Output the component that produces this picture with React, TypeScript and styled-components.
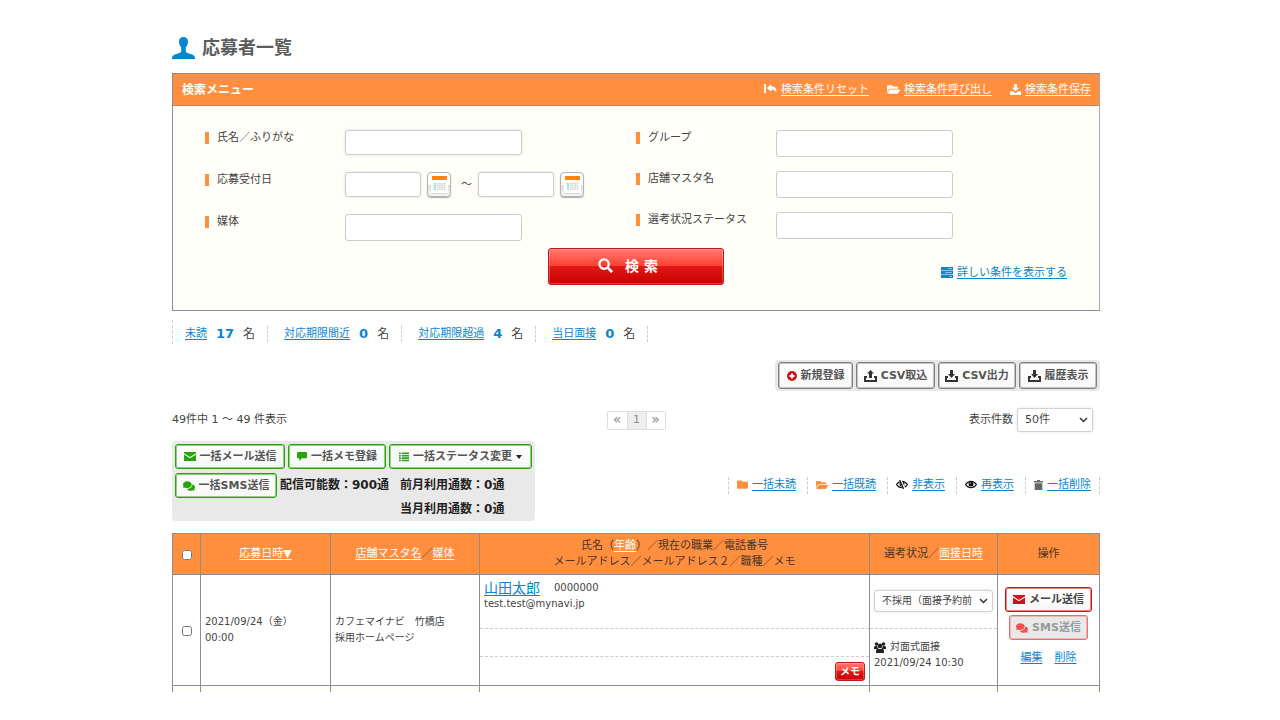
import React from "react";
import styled, { createGlobalStyle, css } from "styled-components";
import { FaFolderOpen, FaFolder, FaComments } from "react-icons/fa";

const color = {
  orange: "#ff8f3f",
  cream: "#fffef8",
  line: "#8e8e8e",
  text: "#444",
  link: "#0a85cf",
  green: "#27a30c",
  red: "#d2101c",
};

const Global = createGlobalStyle`
  *, *::before, *::after { box-sizing: border-box; }
  body { margin: 0; background: #fff; }
  body, button, input, select {
    font-family: "DejaVu Sans", "Noto Sans CJK JP", sans-serif;
    font-size: 11px;
    line-height: 16px;
    color: ${color.text};
  }
  a { color: ${color.link}; text-decoration: underline; text-underline-offset: 2px; }
  svg { flex: none; display: block; }
`;

const Page = styled.main`
  padding: 34px 180px 28px 172px;
`;

const Title = styled.h1`
  display: flex;
  align-items: center;
  gap: 7px;
  margin: 0 0 11px;
  font-size: 18px;
  line-height: 28px;
  color: #5c5c5c;
`;

/* search panel */

const Panel = styled.section`
  border: 1px solid ${color.line};
  border-right-color: #a8a8a8;
  background: ${color.cream};
`;

const PanelHead = styled.header`
  display: flex;
  justify-content: space-between;
  align-items: center;
  height: 32px;
  padding: 0 8px 0 9px;
  background: ${color.orange};
  border-bottom: 1px solid #b98460;
`;

const PanelTitle = styled.h2`
  margin: 0;
  font-size: 12px;
  line-height: 16px;
  color: #fff;
`;

const HeadLinks = styled.nav`
  display: flex;
  gap: 18px;
`;

const IconLink = styled.a<{ $icon?: string; $light?: boolean }>`
  display: inline-flex;
  align-items: center;
  gap: 4px;
  text-decoration: none;
  ${(p) => p.$light && "color: #fff;"}
  svg { color: ${(p) => p.$icon || "inherit"}; }
  span { text-decoration: underline; text-underline-offset: 2px; white-space: nowrap; }
`;

const Form = styled.form`
  padding: 24px 32px 25px;
`;

const Columns = styled.div`
  display: grid;
  grid-template-columns: 1fr 1fr;
`;

const FieldList = styled.div<{ $gap: number }>`
  display: flex;
  flex-direction: column;
  gap: ${(p) => p.$gap}px;
`;

const Field = styled.div`
  display: flex;
  align-items: flex-start;
`;

const FieldLabel = styled.label`
  display: flex;
  align-items: center;
  gap: 8px;
  flex: 0 0 140px;
  &::before {
    content: "";
    width: 4px;
    height: 12px;
    background: ${color.orange};
  }
`;

const TextBox = styled.input<{ $short?: boolean; $tall?: boolean }>`
  width: ${(p) => (p.$short ? 76 : 177)}px;
  height: ${(p) => (p.$tall ? 27 : 25)}px;
  padding: 0 8px;
  border: 1px solid #ccc;
  border-radius: 3px;
  background: #fff;
  ${(p) => !p.$tall && "box-shadow: 0 0 3px rgba(0, 0, 0, 0.12);"}
`;

const DateRange = styled.div`
  display: flex;
  align-items: center;
  gap: 6px;
`;

const RangeMark = styled.span`
  width: 15px;
  text-align: right;
`;

const CalendarButton = styled.button`
  display: flex;
  align-items: center;
  justify-content: center;
  width: 24px;
  height: 25px;
  padding: 0;
  border: 1px solid #b4b4b4;
  border-radius: 4px;
  background: linear-gradient(#fff 50%, #ddd 50%, #f4f4f4);
  box-shadow: 0 1px 1px #aaa;
`;

const FormFoot = styled.div`
  display: grid;
  grid-template-columns: 1fr auto 1fr;
  padding-top: 7px;
`;

const redGloss = css`
  border: 1px solid #c21a1a;
  border-radius: 3px;
  background: linear-gradient(#ff7a72, #ff3e30 50%, #e01818 50%, #c80000);
  box-shadow: inset 0 0 0 1px rgba(255, 255, 255, 0.25);
  color: #fff;
  font-weight: bold;
`;

const SearchButton = styled.button`
  ${redGloss}
  grid-column: 2;
  display: flex;
  align-items: center;
  justify-content: center;
  gap: 12px;
  width: 176px;
  height: 37px;
  padding: 0 16px 2px 0;
  font-size: 14px;
`;

const DetailLink = styled.div`
  justify-self: end;
  align-self: end;
  padding-bottom: 2px;
`;

/* counters */

const Counters = styled.ul`
  display: flex;
  margin: 9px 0 16px;
  padding: 0;
  list-style: none;
  border-left: 1px dashed #ccc;
`;

const Counter = styled.li`
  display: flex;
  align-items: center;
  gap: 9px;
  height: 16px;
  margin: 6px 0 2px;
  padding: 0 12px 0 16px;
  border-right: 1px dashed #ccc;
  font-size: 12px;
  &:first-child { padding-left: 12px; }
  a { font-size: 11px; }
  strong { font-size: 13px; color: ${color.link}; }
`;

/* toolbars */

const ToolRow = styled.div`
  display: flex;
  justify-content: flex-end;
`;

const ToolGroup = styled.div`
  display: flex;
  gap: 3px;
  padding: 2px 3px;
  border-radius: 4px;
  background: #e8e8e8;
`;

const tones = {
  gray: { line: "#808080", edge: "#c4c4c4", text: "#555", icon: "#333" },
  green: { line: color.green, edge: "#8fd07f", text: "#555", icon: color.green },
  red: { line: color.red, edge: "#e88388", text: "#444", icon: color.red },
  muted: { line: "#ee6c70", edge: "#f2b4b6", text: "#999", icon: "#f0504f" },
};

const ToolButton = styled.button<{ $tone: keyof typeof tones; $width: number; $height?: number }>`
  display: flex;
  align-items: center;
  justify-content: center;
  gap: 4px;
  width: ${(p) => p.$width}px;
  height: ${(p) => p.$height || 25}px;
  padding: 0;
  border: 1px solid ${(p) => tones[p.$tone].line};
  border-radius: 3px;
  box-shadow: inset 0 0 0 1px ${(p) => tones[p.$tone].edge};
  background: ${(p) => (p.$tone === "muted" ? "#e9e9e9" : "linear-gradient(#fff, #f7f7f7)")};
  color: ${(p) => tones[p.$tone].text};
  font-weight: bold;
  white-space: nowrap;
  svg { color: ${(p) => tones[p.$tone].icon}; }
`;

const ListBar = styled.div`
  display: grid;
  grid-template-columns: 1fr auto 1fr;
  align-items: center;
  margin: 17px 0 9px;
`;

const Pager = styled.nav`
  display: flex;
  border: 1px solid #ddd;
  border-radius: 2px;
`;

const PageLink = styled.a<{ $current?: boolean }>`
  width: 19px;
  height: 17px;
  line-height: 15px;
  font-size: ${(p) => (p.$current ? 11 : 14)}px;
  text-align: center;
  text-decoration: none;
  color: #888;
  background: ${(p) => (p.$current ? "#eee" : "#fff")};
  & + & { border-left: 1px solid #ddd; }
`;

const PerPage = styled.label`
  display: flex;
  align-items: center;
  justify-content: flex-end;
  gap: 4px;
  padding-right: 7px;
`;

const SelectWrap = styled.span<{ $width: number }>`
  position: relative;
  display: block;
  width: ${(p) => p.$width}px;
  svg {
    position: absolute;
    right: 5px;
    top: 50%;
    margin-top: -3px;
    pointer-events: none;
  }
`;

const Select = styled.select<{ $small?: boolean }>`
  appearance: none;
  display: block;
  width: 100%;
  height: ${(p) => (p.$small ? 22 : 24)}px;
  padding: 0 18px 0 7px;
  border: 1px solid #d2d2d2;
  border-radius: 3px;
  background: #fff;
  box-shadow: 0 0 3px rgba(0, 0, 0, 0.12);
  font-size: ${(p) => (p.$small ? 10 : 11)}px;
`;

const BulkRow = styled.div`
  display: flex;
  justify-content: space-between;
  align-items: center;
  margin-bottom: 12px;
`;

const BulkBox = styled.div`
  display: flex;
  flex-direction: column;
  gap: 4px;
  padding: 3px 3px 4px;
  border-radius: 4px;
  background: #e9e9e9;
`;

const BulkLine = styled.div`
  display: flex;
  gap: 3px;
`;

const Quota = styled.dl`
  display: grid;
  grid-template-columns: auto auto;
  justify-content: start;
  column-gap: 11px;
  row-gap: 8px;
  margin: 0;
  padding-top: 4px;
  font-size: 12px;
  font-weight: bold;
  color: #222;
  div { display: flex; }
  div:last-child { grid-column: 2; }
  dd { margin: 0; }
`;

const BulkLinks = styled.ul`
  display: flex;
  margin: 8px 0 0;
  padding: 0;
  list-style: none;
  border-left: 1px dashed #ccc;
  li {
    padding: 0 8px;
    height: 17px;
    border-right: 1px dashed #ccc;
  }
  li:not(:last-child) { padding-right: 11px; }
`;

/* applicants table */

const Table = styled.table`
  width: 100%;
  table-layout: fixed;
  border-collapse: collapse;
  th, td { border: 1px solid ${color.line}; padding: 0 4px; }
  th {
    height: 41px;
    background: ${color.orange};
    font-weight: normal;
    color: #4b3426;
  }
  th a { color: #fff; }
  td { font-size: 10px; text-align: left; }
`;

const Check = styled.input`
  display: block;
  width: 10px;
  height: 10px;
  margin: 2px auto 0;
`;

const FlushCell = styled.td`
  && { padding: 0; height: 111px; vertical-align: top; }
`;

const Slot = styled.div<{ $height: number; $last?: boolean }>`
  height: ${(p) => p.$height}px;
  padding: 5px 4px;
  ${(p) => !p.$last && "border-bottom: 1px dashed #ccc;"}
`;

const NameLine = styled.div`
  display: flex;
  align-items: center;
  gap: 14px;
  a { font-size: 14px; }
`;

const MemoButton = styled.button`
  ${redGloss}
  display: block;
  width: 30px;
  height: 19px;
  margin-left: auto;
  padding: 0;
  font-size: 10px;
`;

const StatusSlot = styled(Slot)`
  padding-top: ${(p) => (p.$last ? 10 : 15)}px;
`;

const Meeting = styled.div`
  display: flex;
  align-items: center;
  gap: 4px;
  svg { color: #222; }
`;

const Actions = styled.div`
  display: flex;
  flex-direction: column;
  align-items: center;
  gap: 3px;
  padding-top: 12px;
  font-size: 11px;
`;

const ActionLinks = styled.div`
  display: flex;
  gap: 12px;
  padding-top: 7px;
`;

const NextRow = styled.tr`
  background: ${color.cream};
  && td { height: 6px; border-bottom: 0; }
`;

/* icons */

const UserIcon = () => (
  <svg width="23" height="22" viewBox="0 0 23 22" fill="#0387d4" aria-hidden="true">
    <path d="M11.500 0C8.500 0 6.800 2 7 5c.1 2.200 1 4 2.200 5.200v4.300c0 .9-1.200 1.300-3.200 1.900C2.200 17.500 0 18.300 0 21v1h23v-1c0-2.700-2.200-3.500-6-4.600-2-.6-3.200-1-3.200-1.900v-4.300C15 9 15.900 7.200 16 5c.2-3-1.500-5-4.500-5z" />
  </svg>
);

const ResetIcon = () => (
  <svg width="13" height="11" viewBox="0 0 13 11" fill="currentColor" aria-hidden="true">
    <path d="M0 0h2v9H0zM3 4l4-4v2.300c3.600 0 5.800 2 5.500 6.200-.9-2-2.500-2.800-5.500-2.800V8z" />
  </svg>
);

const SaveIcon = () => (
  <svg width="11" height="11" viewBox="0 0 12 12" fill="currentColor" aria-hidden="true">
    <path d="M4.500 0h3v4H10L6 8 2 4h2.500zM0 8h3l3 2 3-2h3v4H0z" />
  </svg>
);

const PlusIcon = () => (
  <svg width="10" height="10" viewBox="0 0 10 10" aria-hidden="true">
    <circle cx="5" cy="5" r="5" fill={color.red} />
    <path d="M5 2.500v5M2.500 5h5" stroke="#fff" strokeWidth="2" />
  </svg>
);

const TrayIcon = ({ up }: { up?: boolean }) => (
  <svg width="13" height="12" viewBox="0 0 13 12" fill="currentColor" aria-hidden="true">
    <path d="M0 6h3v2H2v2h9V8h-1V6h3v6H0z" />
    <path d={up ? "M6.500 0L10 3.500H8V8H5V3.500H3z" : "M5 0h3v4h2L6.500 8 3 4h2z"} />
  </svg>
);

const CalendarIcon = () => (
  <svg width="17" height="18" viewBox="0 0 17 18" aria-hidden="true">
    <path fill="#fff" d="M0 4h17v13H0z" />
    <path fill="#d8d8d8" d="M1 17h15v1H1z" />
    <path fill="#ff8412" d="M1 0h15v4H1z" />
    <path fill="#6fe3d6" d="M3 7h2v7H3z" />
    <path stroke="#cfcfcf" strokeWidth="7" strokeDasharray="1.500 .7" d="M6 10.500h9" />
    <path stroke="#fff" strokeWidth=".6" d="M2 8.800h13M2 10.800h13M2 12.700h13" />
  </svg>
);

const LensIcon = () => (
  <svg width="15" height="15" viewBox="0 0 16 16" fill="none" stroke="#fff" aria-hidden="true">
    <circle cx="6.500" cy="6.500" r="5" strokeWidth="2.400" />
    <path d="M10 10l5 5" strokeWidth="3" />
  </svg>
);

const RowsIcon = () => (
  <svg width="12" height="11" viewBox="0 0 12 11" aria-hidden="true">
    <path fill="#1a80c8" d="M0 0h12v3H0zM0 4h12v3H0zM0 8h12v3H0z" />
    <path fill="#8fc6ea" d="M7 1h4v1H7zM4 5h7v1H4zM8 9h3v1H8zM0 3h12v1H0zM0 7h12v1H0z" />
  </svg>
);

const MailIcon = () => (
  <svg width="12" height="9" viewBox="0 0 12 9" fill="currentColor" aria-hidden="true">
    <path d="M0 0h12v1.200L6 5 0 1.200zM0 2.500l6 3.800 6-3.800V9H0z" />
  </svg>
);

const MemoIcon = () => (
  <svg width="10" height="9" viewBox="0 0 11 10" fill="currentColor" aria-hidden="true">
    <path d="M1 0h9q1 0 1 1v5q0 1-1 1H5.500L2.500 10V7H1Q0 7 0 6V1q0-1 1-1z" />
  </svg>
);

const ListIcon = () => (
  <svg width="10" height="10" viewBox="0 0 11 10" fill="currentColor" aria-hidden="true">
    <path d="M0 0h2v1.700H0zM3 0h8v1.700H3zM0 2.700h2v1.700H0zM3 2.700h8v1.700H3zM0 5.400h2v1.700H0zM3 5.400h8v1.700H3zM0 8.100h2v1.700H0zM3 8.100h8v1.700H3z" />
  </svg>
);

const CaretIcon = () => (
  <svg width="6" height="4" viewBox="0 0 6 4" aria-hidden="true">
    <path fill="#222" d="M0 0h6L3 4z" />
  </svg>
);

const ChevronIcon = () => (
  <svg width="9" height="6" viewBox="0 0 9 6" fill="none" stroke="#333" strokeWidth="1.500" aria-hidden="true">
    <path d="M1 1l3.500 3.500L8 1" />
  </svg>
);

const EyeIcon = ({ off }: { off?: boolean }) => (
  <svg width="12" height="9" viewBox="0 0 12 9" aria-hidden="true">
    <path d="M.6 4.500C3.200.2 8.800.2 11.400 4.500 8.800 8.800 3.200 8.800.6 4.500z" fill="#fff" stroke="currentColor" strokeWidth="1.200" />
    <circle cx="6" cy="4" r="2.500" fill="currentColor" />
    <path d="M5 3.800q0-1 1-1.200" stroke="#fff" strokeWidth=".7" fill="none" />
    {off && <path d="M4.300 0l4 9" stroke="#fff" strokeWidth="2.400" />}
    {off && <path d="M3.700 0l4 9" stroke="currentColor" strokeWidth="1.200" />}
  </svg>
);

const TrashIcon = () => (
  <svg width="9" height="10" viewBox="0 0 9 10" fill="currentColor" aria-hidden="true">
    <path d="M3 0h3v1h3v1.500H0V1h3zM.7 3.200h7.600V10H.7z" />
  </svg>
);

const GroupIcon = () => (
  <svg width="12" height="11" viewBox="0 0 12 11" fill="currentColor" aria-hidden="true">
    <circle cx="2.500" cy="2" r="1.800" />
    <circle cx="9.500" cy="2" r="1.800" />
    <circle cx="6" cy="3.900" r="2.300" />
    <path d="M0 7V5.500Q.1 4 1.300 4h2Q3.300 5.500 4 6.400L2.500 7zM12 7V5.500Q11.900 4 10.700 4h-2q0 1.500-.7 2.400L9.500 7zM2 11V9q.2-2.400 2-2.400 2 1 4 0 1.800 0 2 2.400v2z" />
  </svg>
);

const counters = [
  { label: "未読", count: 17 },
  { label: "対応期限間近", count: 0 },
  { label: "対応期限超過", count: 4 },
  { label: "当日面接", count: 0 },
];

const bulkLinks = [
  { label: "一括未読", icon: <FaFolder size={11} />, tint: color.orange },
  { label: "一括既読", icon: <FaFolderOpen size={12} />, tint: color.orange },
  { label: "非表示", icon: <EyeIcon off />, tint: "#111" },
  { label: "再表示", icon: <EyeIcon />, tint: "#111" },
  { label: "一括削除", icon: <TrashIcon />, tint: "#666" },
];

const rightFields = [
  { id: "group", label: "グループ" },
  { id: "shop", label: "店舗マスタ名" },
  { id: "status", label: "選考状況ステータス" },
];

export default function App() {
  return (
    <Page>
      <Global />
      <Title>
        <UserIcon />
        応募者一覧
      </Title>

      <Panel>
        <PanelHead>
          <PanelTitle>検索メニュー</PanelTitle>
          <HeadLinks>
            <IconLink href="#" $light><ResetIcon /><span>検索条件リセット</span></IconLink>
            <IconLink href="#" $light><FaFolderOpen size={13} /><span>検索条件呼び出し</span></IconLink>
            <IconLink href="#" $light><SaveIcon /><span>検索条件保存</span></IconLink>
          </HeadLinks>
        </PanelHead>
        <Form onSubmit={(e) => e.preventDefault()}>
          <Columns>
            <FieldList $gap={17}>
              <Field>
                <FieldLabel htmlFor="name">氏名／ふりがな</FieldLabel>
                <TextBox id="name" />
              </Field>
              <Field>
                <FieldLabel htmlFor="from">応募受付日</FieldLabel>
                <DateRange>
                  <TextBox id="from" $short />
                  <CalendarButton type="button" aria-label="開始日を選択"><CalendarIcon /></CalendarButton>
                  <RangeMark>～</RangeMark>
                  <TextBox $short aria-label="終了日" />
                  <CalendarButton type="button" aria-label="終了日を選択"><CalendarIcon /></CalendarButton>
                </DateRange>
              </Field>
              <Field>
                <FieldLabel htmlFor="media">媒体</FieldLabel>
                <TextBox id="media" $tall />
              </Field>
            </FieldList>
            <FieldList $gap={14}>
              {rightFields.map((f) => (
                <Field key={f.id}>
                  <FieldLabel htmlFor={f.id}>{f.label}</FieldLabel>
                  <TextBox id={f.id} $tall />
                </Field>
              ))}
            </FieldList>
          </Columns>
          <FormFoot>
            <SearchButton type="submit"><LensIcon />検 索</SearchButton>
            <DetailLink>
              <IconLink href="#"><RowsIcon /><span>詳しい条件を表示する</span></IconLink>
            </DetailLink>
          </FormFoot>
        </Form>
      </Panel>

      <Counters>
        {counters.map((c) => (
          <Counter key={c.label}>
            <a href="#">{c.label}</a>
            <strong>{c.count}</strong>
            <span>名</span>
          </Counter>
        ))}
      </Counters>

      <ToolRow>
        <ToolGroup>
          <ToolButton $tone="gray" $width={75} $height={27}><PlusIcon />新規登録</ToolButton>
          <ToolButton $tone="gray" $width={79} $height={27}><TrayIcon up />CSV取込</ToolButton>
          <ToolButton $tone="gray" $width={78} $height={27}><TrayIcon />CSV出力</ToolButton>
          <ToolButton $tone="gray" $width={78} $height={27}><TrayIcon />履歴表示</ToolButton>
        </ToolGroup>
      </ToolRow>

      <ListBar>
        <span>49件中 1 ～ 49 件表示</span>
        <Pager aria-label="ページ">
          <PageLink href="#">«</PageLink>
          <PageLink href="#" $current>1</PageLink>
          <PageLink href="#">»</PageLink>
        </Pager>
        <PerPage>
          表示件数
          <SelectWrap $width={76}>
            <Select defaultValue="50"><option value="50">50件</option></Select>
            <ChevronIcon />
          </SelectWrap>
        </PerPage>
      </ListBar>

      <BulkRow>
        <BulkBox>
          <BulkLine>
            <ToolButton $tone="green" $width={110}><MailIcon />一括メール送信</ToolButton>
            <ToolButton $tone="green" $width={98}><MemoIcon />一括メモ登録</ToolButton>
            <ToolButton $tone="green" $width={143}><ListIcon />一括ステータス変更<CaretIcon /></ToolButton>
          </BulkLine>
          <BulkLine>
            <ToolButton $tone="green" $width={102}><FaComments size={12} />一括SMS送信</ToolButton>
            <Quota>
              <div><dt>配信可能数：</dt><dd>900通</dd></div>
              <div><dt>前月利用通数：</dt><dd>0通</dd></div>
              <div><dt>当月利用通数：</dt><dd>0通</dd></div>
            </Quota>
          </BulkLine>
        </BulkBox>
        <BulkLinks>
          {bulkLinks.map((b) => (
            <li key={b.label}>
              <IconLink href="#" $icon={b.tint}>{b.icon}<span>{b.label}</span></IconLink>
            </li>
          ))}
        </BulkLinks>
      </BulkRow>

      <Table>
        <colgroup>
          <col width="28" />
          <col width="130" />
          <col width="149" />
          <col />
          <col width="128" />
          <col width="102" />
        </colgroup>
        <thead>
          <tr>
            <th><Check type="checkbox" aria-label="すべて選択" /></th>
            <th><a href="#">応募日時▼</a></th>
            <th><a href="#">店舗マスタ名</a>／<a href="#">媒体</a></th>
            <th>氏名（<a href="#">年齢</a>）／現在の職業／電話番号<br />メールアドレス／メールアドレス２／職種／メモ</th>
            <th>選考状況／<a href="#">面接日時</a></th>
            <th>操作</th>
          </tr>
        </thead>
        <tbody>
          <tr>
            <td><Check type="checkbox" aria-label="山田太郎を選択" /></td>
            <td>2021/09/24（金）<br />00:00</td>
            <td>カフェマイナビ　竹橋店<br />採用ホームページ</td>
            <FlushCell>
              <Slot $height={54}>
                <NameLine><a href="#">山田太郎</a><span>0000000</span></NameLine>
                test.test@mynavi.jp
              </Slot>
              <Slot $height={28} />
              <Slot $height={28} $last><MemoButton>メモ</MemoButton></Slot>
            </FlushCell>
            <FlushCell>
              <StatusSlot $height={54}>
                <SelectWrap $width={119}>
                  <Select $small aria-label="選考状況" defaultValue="ng"><option value="ng">不採用（面接予約前</option></Select>
                  <ChevronIcon />
                </SelectWrap>
              </StatusSlot>
              <StatusSlot $height={56} $last>
                <Meeting><GroupIcon />対面式面接</Meeting>
                2021/09/24 10:30
              </StatusSlot>
            </FlushCell>
            <FlushCell>
              <Actions>
                <ToolButton $tone="red" $width={87}><MailIcon />メール送信</ToolButton>
                <ToolButton $tone="muted" $width={79}><FaComments size={12} />SMS送信</ToolButton>
                <ActionLinks><a href="#">編集</a><a href="#">削除</a></ActionLinks>
              </Actions>
            </FlushCell>
          </tr>
          <NextRow><td /><td /><td /><td /><td /><td /></NextRow>
        </tbody>
      </Table>
    </Page>
  );
}
